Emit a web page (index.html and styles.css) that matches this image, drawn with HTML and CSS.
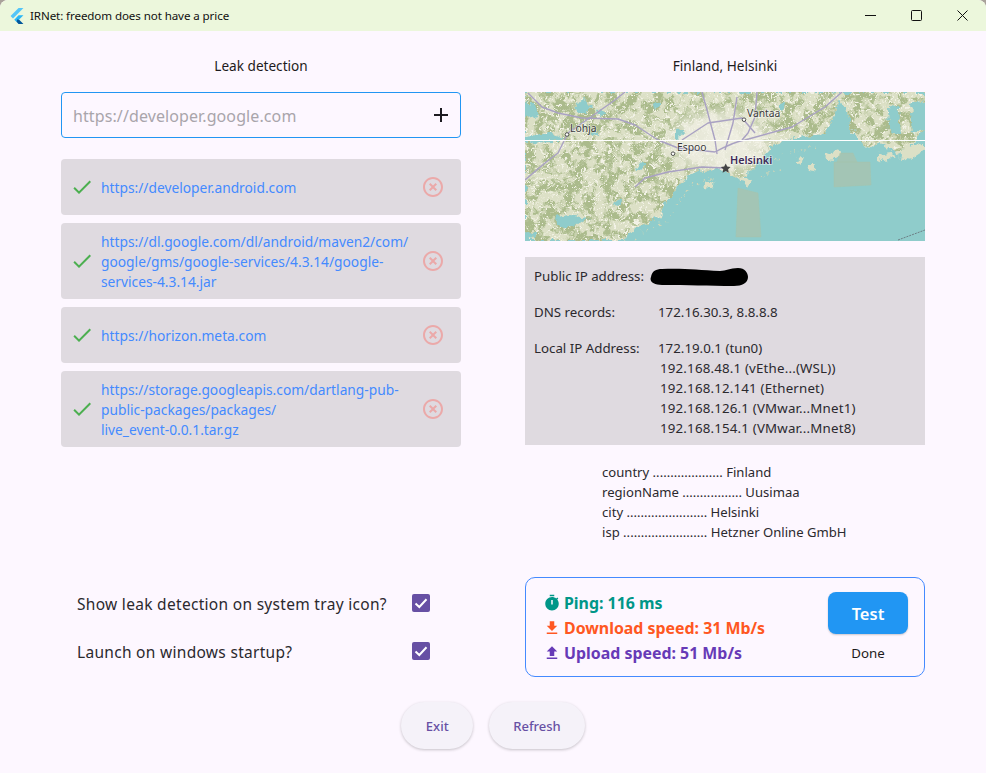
FILE: index.html
```html
<!DOCTYPE html>
<html lang="en">
<head>
<meta charset="utf-8">
<title>IRNet</title>
<link rel="stylesheet" href="styles.css">
</head>
<body>
<div class="window">
  <header class="titlebar">
    <svg class="logo" viewBox="2 0 20 24"><path class="logo-a" d="M14.3 0 2.300 12 6 15.700 21.700 0z"/><path class="logo-b" d="M14.300 11 7.900 17.500l3.600 3.600L21.700 11z"/><path class="logo-c" d="M11.500 21.100 14.300 24h7.400l-6.400-6.500-3.300-.4z"/></svg>
    <span class="app-title">IRNet: freedom does not have a price</span>
    <div class="win-controls">
      <span class="win-btn"><svg class="win-icon" viewBox="0 0 11 11"><path d="M0 5.500h11"/></svg></span>
      <span class="win-btn"><svg class="win-icon" viewBox="0 0 11 11"><rect x=".5" y=".5" width="10" height="10" rx="1"/></svg></span>
      <span class="win-btn"><svg class="win-icon" viewBox="0 0 11 11"><path d="M.5.500l10 10M10.500.500l-10 10"/></svg></span>
    </div>
  </header>

  <main class="content">
    <div class="columns">
      <section class="col">
        <h2 class="col-title">Leak detection</h2>
        <div class="url-input">
          <span class="placeholder">https://developer.google.com</span>
          <svg class="plus" viewBox="0 0 24 24"><path d="M19 13h-6v6h-2v-6H5v-2h6V5h2v6h6v2z"/></svg>
        </div>
        <ul class="url-list">
          <li class="url-item">
            <svg class="ok" viewBox="0 0 24 24"><path d="M9 16.170 4.830 12l-1.420 1.410L9 19 21 7l-1.410-1.410z"/></svg>
            <span class="url">https://developer.android.com</span>
            <svg class="del" viewBox="0 0 24 24"><path d="M14.590 8 12 10.590 9.410 8 8 9.410 10.590 12 8 14.590 9.410 16 12 13.410 14.590 16 16 14.590 13.410 12 16 9.410 14.590 8zM12 2C6.470 2 2 6.470 2 12s4.470 10 10 10 10-4.470 10-10S17.530 2 12 2zm0 18c-4.410 0-8-3.590-8-8s3.590-8 8-8 8 3.590 8 8-3.590 8-8 8z"/></svg>
          </li>
          <li class="url-item">
            <svg class="ok" viewBox="0 0 24 24"><path d="M9 16.170 4.830 12l-1.420 1.410L9 19 21 7l-1.410-1.410z"/></svg>
            <span class="url">https://dl.google.com/dl/android/maven2/com/<br>google/gms/google-services/4.3.14/google-<br>services-4.3.14.jar</span>
            <svg class="del" viewBox="0 0 24 24"><path d="M14.590 8 12 10.590 9.410 8 8 9.410 10.590 12 8 14.590 9.410 16 12 13.410 14.590 16 16 14.590 13.410 12 16 9.410 14.590 8zM12 2C6.470 2 2 6.470 2 12s4.470 10 10 10 10-4.470 10-10S17.530 2 12 2zm0 18c-4.410 0-8-3.590-8-8s3.590-8 8-8 8 3.590 8 8-3.590 8-8 8z"/></svg>
          </li>
          <li class="url-item">
            <svg class="ok" viewBox="0 0 24 24"><path d="M9 16.170 4.830 12l-1.420 1.410L9 19 21 7l-1.410-1.410z"/></svg>
            <span class="url">https://horizon.meta.com</span>
            <svg class="del" viewBox="0 0 24 24"><path d="M14.590 8 12 10.590 9.410 8 8 9.410 10.590 12 8 14.590 9.410 16 12 13.410 14.590 16 16 14.590 13.410 12 16 9.410 14.590 8zM12 2C6.470 2 2 6.470 2 12s4.470 10 10 10 10-4.470 10-10S17.530 2 12 2zm0 18c-4.410 0-8-3.590-8-8s3.590-8 8-8 8 3.590 8 8-3.590 8-8 8z"/></svg>
          </li>
          <li class="url-item">
            <svg class="ok" viewBox="0 0 24 24"><path d="M9 16.170 4.830 12l-1.420 1.410L9 19 21 7l-1.410-1.410z"/></svg>
            <span class="url">https://storage.googleapis.com/dartlang-pub-<br>public-packages/packages/<br>live_event-0.0.1.tar.gz</span>
            <svg class="del" viewBox="0 0 24 24"><path d="M14.590 8 12 10.590 9.410 8 8 9.410 10.590 12 8 14.590 9.410 16 12 13.410 14.590 16 16 14.590 13.410 12 16 9.410 14.590 8zM12 2C6.470 2 2 6.470 2 12s4.470 10 10 10 10-4.470 10-10S17.530 2 12 2zm0 18c-4.410 0-8-3.590-8-8s3.590-8 8-8 8 3.590 8 8-3.590 8-8 8z"/></svg>
          </li>
        </ul>
      </section>

      <section class="col">
        <h2 class="col-title">Finland, Helsinki</h2>
        <svg class="map" viewBox="0 0 400 149">
          <defs>
            <filter id="rough" x="-5%" y="-5%" width="110%" height="110%" color-interpolation-filters="sRGB">
              <feTurbulence type="fractalNoise" baseFrequency=".14" numOctaves="4" seed="7"/>
              <feDisplacementMap in="SourceGraphic" scale="10" xChannelSelector="R" yChannelSelector="G"/>
            </filter>
            <filter id="forest" x="0" y="0" width="100%" height="100%" color-interpolation-filters="sRGB">
              <feTurbulence type="fractalNoise" baseFrequency=".1" numOctaves="5" seed="3"/>
              <feColorMatrix type="matrix" values="0 0 0 0 .67  0 0 0 0 .735  0 0 0 0 .55  7 0 0 0 -3.100"/>
            </filter>
            <filter id="urban" x="0" y="0" width="100%" height="100%" color-interpolation-filters="sRGB">
              <feTurbulence type="fractalNoise" baseFrequency=".4" numOctaves="2" seed="11"/>
              <feColorMatrix type="matrix" values="0 0 0 0 .95  0 0 0 0 .95  0 0 0 0 .9  0 8 0 0 -4.600"/>
            </filter>
            <radialGradient id="cityfade"><stop offset="0" stop-color="#efeee2"/><stop offset=".65" stop-color="#efeee2" stop-opacity=".8"/><stop offset="1" stop-color="#efeee2" stop-opacity="0"/></radialGradient>
            <clipPath id="landclip"><path d="M0 0H400V35L385 55 370 60 355 50 345 55 330 45 322 20 315 8 308 25 300 42 270 45 250 52 240 62 225 80 215 88 205 82 195 76 175 80 160 85 145 105 135 125 110 135 100 149H0z"/></clipPath>
          </defs>
          <rect class="m-water" width="400" height="149"/>
          <g filter="url(#rough)">
            <g clip-path="url(#landclip)">
              <rect class="m-land" width="400" height="149"/>
              <rect width="400" height="149" filter="url(#forest)"/>
              <ellipse cx="195" cy="50" rx="62" ry="38" fill="url(#cityfade)"/>
              <rect width="400" height="149" filter="url(#urban)"/>
            </g>
            <path class="m-land" d="M300 62l12-4 6 3-8 7-8-1zM352 62l14-2 4 4-10 6-8-2zM372 60l18-8 10-1v7l-14 9-12-2zM212 86l14 2-3 5-10-2zM284 74l8 0-3 5-7-1zM180 92l8-2 1 5-7 2zM270 68l8-2-1 4-6 1zM60 140l10-2 2 4-10 2z"/>
            <path class="m-skerries" d="M112 146 122 138 140 130 152 112 168 92 190 86M240 72 262 60 290 56M236 84 256 78"/>
            <g class="m-lakes">
              <path d="M0 10 10 12 13 24 3 26 0 24zM50 10l12-2 4 10-10 4zM72 20l6-3 2 7-6 1zM0 44l28-3 12 6-12 3-28 1zM150 38l6-1 1 8-7 1zM112 72l10-1 1 5-10 2zM30 126l14-3 20 3-8 6-18 4zM0 140l10 1-2 6-8 2zM363 14l11 1 2 28-12-4zM385 12l15-4v28l-12 4zM64 40l10-3 1 6-9 2zM128 12l6-2 1 5-6 2zM254 12l7-1-1 7-6 1zM88 108l9 1-3 5-7-1z"/>
            </g>
          </g>
          <path class="m-area" d="M213 96 233 101 236 145 211 145zM309 70H345L346 93 309 95zM315 61H328L332 70H312z"/>
          <g class="m-roads">
            <path d="M3 1 17 15 33 21 57 26 93 27 110 33 133 48 153 56 190 60"/>
            <path d="M190 60C205 52 212 49 220 48L267 35 300 15 317 0"/>
            <path d="M157 48 183 31 217 26 230 41"/>
            <path d="M177 0 182 18 190 48 192 62M212 5 208 31 200 58M232 0 230 25 223 41 217 48"/>
            <path d="M0 88 20 71 33 61 43 41 90 8 100 0"/>
            <path d="M110 95 120 86 143 80 177 75 200 76"/>
          </g>
          <path class="m-shore" d="M373 148 400 138"/>
          <rect class="m-seam" y="48" width="400" height="1"/>
          <g class="m-towns">
            <circle cx="42" cy="42.500" r="1.800"/>
            <circle cx="148" cy="61.700" r="1.800"/>
            <circle cx="219" cy="27.700" r="1.800"/>
          </g>
          <text class="m-label" x="45" y="40">Lohja</text>
          <text class="m-label" x="152" y="59">Espoo</text>
          <text class="m-label" x="222" y="25.300">Vantaa</text>
          <path class="m-star" d="M200.700 71.500l1.500 3.100 3.400.4-2.500 2.300.7 3.400-3.100-1.700-3.100 1.700.7-3.400-2.500-2.300 3.400-.4z"/>
          <text class="m-label m-capital" x="205" y="72">Helsinki</text>
        </svg>

        <div class="net-info">
          <div class="net-row">
            <span class="net-short">Public IP address:</span>
            <svg class="redact" viewBox="3 0 97 18"><path d="M3 9C4 3 8 1 14 1 35 0 50 2 72 3 78 3 82 0 90 0 97 0 100 5 100 9 100 15 94 18 86 18 60 18 40 17 14 17 6 17 1 14 3 9z"/></svg>
          </div>
          <div class="net-row"><span class="net-label">DNS records:</span><span>172.16.30.3, 8.8.8.8</span></div>
          <div class="net-row">
            <span class="net-label">Local IP Address:</span>
            <div class="ip-list">
              <span>172.19.0.1 (tun0)</span>
              <span class="ip-more">192.168.48.1 (vEthe...(WSL))</span>
              <span class="ip-more">192.168.12.141 (Ethernet)</span>
              <span class="ip-more">192.168.126.1 (VMwar...Mnet1)</span>
              <span class="ip-more">192.168.154.1 (VMwar...Mnet8)</span>
            </div>
          </div>
        </div>

        <div class="geo">
          <div>country .................... Finland</div>
          <div>regionName ................. Uusimaa</div>
          <div>city ....................... Helsinki</div>
          <div>isp ........................ Hetzner Online GmbH</div>
        </div>
      </section>
    </div>

    <div class="columns lower">
      <div class="settings">
        <label class="setting"><span>Show leak detection on system tray icon?</span>
          <span class="checkbox"><svg viewBox="0 0 18 18"><path d="M3.500 9.500 7.300 13 14.500 5.300"/></svg></span></label>
        <label class="setting"><span>Launch on windows startup?</span>
          <span class="checkbox"><svg viewBox="0 0 18 18"><path d="M3.500 9.500 7.300 13 14.500 5.300"/></svg></span></label>
      </div>
      <div class="speed">
        <div class="speed-lines">
          <div class="speed-line ping"><svg viewBox="0 0 24 24"><path fill-rule="evenodd" d="M9 1h6v2H9zm10.030 6.390 1.420-1.420c-.43-.51-.9-.99-1.410-1.410l-1.420 1.420C16.070 4.740 14.120 4 12 4c-4.970 0-9 4.030-9 9s4.020 9 9 9 9-4.030 9-9c0-2.120-.74-4.070-1.970-5.610zM13 14h-2V8h2v6z"/></svg>Ping: 116 ms</div>
          <div class="speed-line down"><svg viewBox="0 0 24 24"><path d="M19 9h-4V3H9v6H5l7 7 7-7zM5 18v2h14v-2H5z"/></svg>Download speed: 31 Mb/s</div>
          <div class="speed-line up"><svg viewBox="0 0 24 24"><path d="M9 16h6v-6h4l-7-7-7 7h4zm-4 2h14v2H5z"/></svg>Upload speed: 51 Mb/s</div>
        </div>
        <div class="test">
          <button class="test-btn" type="button">Test</button>
          <span class="test-status">Done</span>
        </div>
      </div>
    </div>

    <footer class="actions">
      <button class="pill" type="button">Exit</button>
      <button class="pill" type="button">Refresh</button>
    </footer>
  </main>
</div>
</body>
</html>
```
FILE: styles.css
```css
* { box-sizing: border-box; }
html, body { margin: 0; height: 100%; }
body { background: #a9a29a; font-family: "Noto Sans", "Open Sans", sans-serif; color: #1d1b20; overflow: hidden; }
.window { width: 986px; height: 773px; background: #fdf7ff; border-radius: 8px 8px 0 0; overflow: hidden; display: flex; flex-direction: column; }
.titlebar { height: 31px; flex: none; background: #ecf7dc; display: flex; align-items: center; padding-left: 10px; }
.logo { width: 14px; height: 16px; margin-right: 6px; }
.logo-a { fill: #54c5f8; }
.logo-b { fill: #29b6f6; }
.logo-c { fill: #01579b; }
.app-title { font-size: 11.600px; letter-spacing: -.1px; color: #111; }
.win-controls { margin-left: auto; display: flex; align-items: center; height: 100%; padding-right: 1px; }
.win-btn { width: 46px; height: 100%; display: flex; align-items: center; justify-content: center; }
.win-icon { width: 11px; height: 11px; fill: none; stroke: #111; stroke-width: 1; }
.content { flex: 1; padding: 0 61px; display: flex; flex-direction: column; }
.columns { display: grid; grid-template-columns: 400px 400px; column-gap: 64px; }
.col-title { margin: 25px 0 16px; font-size: 13.600px; font-weight: 400; line-height: 20px; text-align: center; color: #1d1b20; }
.url-input { height: 46px; border: 1px solid #2196f3; border-radius: 4px; display: flex; align-items: center; justify-content: space-between; padding: 0 7px 0 11px; }
.placeholder { font-size: 16px; letter-spacing: .1px; color: #a9a5ab; padding-top: 2px; }
.plus { width: 24px; height: 24px; fill: #1d1b20; }
.url-list { list-style: none; margin: 21px 0 0; padding: 0; display: flex; flex-direction: column; gap: 8px; }
.url-item { min-height: 56px; background: #dfdae0; border-radius: 4px; padding: 8px 16px 7px 9px; display: flex; align-items: center; }
.ok { width: 24px; height: 24px; flex: none; fill: #4caf50; margin: -2px 7px 0 0; }
.url { flex: 1; font-size: 13.770px; line-height: 20px; padding-top: 1px; color: #448aff; white-space: nowrap; }
.del { width: 24px; height: 24px; flex: none; fill: #eba9a9; margin-top: -2px; }
.map { display: block; width: 400px; height: 149px; }
.m-water { fill: #8fcccb; }
.m-land { fill: #dce0c6; }
.m-lakes { fill: #8fcccb; }
.m-skerries { fill: none; stroke: #cfd6b8; stroke-width: 1.400; stroke-dasharray: 1.500 5; }
.m-area { fill: #a8c4b0; stroke: #a9c2a6; stroke-width: .5; opacity: .8; }
.m-roads { fill: none; stroke: #a9a1c3; stroke-width: 1.400; stroke-linejoin: round; }
.m-shore { stroke: #6d7f85; stroke-width: 1; stroke-dasharray: 2 1; }
.m-seam { fill: #fff; }
.m-towns { fill: #fff; stroke: #444; stroke-width: .9; }
.m-label { font-size: 10.300px; fill: #3a3a3a; stroke: rgba(255,255,255,.55); stroke-width: 1.500px; paint-order: stroke; }
.m-capital { font-size: 10.800px; font-weight: 600; fill: #3d2b57; }
.m-star { fill: #444; }
.net-info { margin-top: 16px; background: #dfdae0; padding: 9px 9px 7px; height: 188px; font-size: 13.300px; line-height: 20px; color: #2b292e; display: flex; flex-direction: column; gap: 16px; }
.net-row { display: flex; }
.net-label { width: 124px; flex: none; }
.net-short { width: 116px; flex: none; }
.redact { width: 99px; height: 18px; margin-top: 2px; }
.ip-list { display: flex; flex-direction: column; }
.ip-more { padding-left: 2px; letter-spacing: .18px; }
.geo { margin-top: 17px; padding-left: 77px; font-size: 13.100px; line-height: 20px; color: #2b292e; white-space: nowrap; }
.lower { margin-top: 35px; }
.settings { padding: 3px 31px 0 16px; display: flex; flex-direction: column; }
.setting { height: 48px; display: flex; align-items: center; justify-content: space-between; font-size: 15.500px; color: #2b292e; letter-spacing: .3px; }
.checkbox { width: 18px; height: 18px; background: #6750a4; border-radius: 2px; display: block; margin-top: -2px; }
.checkbox svg { display: block; width: 18px; height: 18px; fill: none; stroke: #fff; stroke-width: 2; }
.speed { height: 100px; border: 1px solid #448aff; border-radius: 10px; padding: 0 16px 0 17px; display: flex; align-items: center; justify-content: space-between; }
.speed-lines { display: flex; flex-direction: column; gap: 5px; padding-top: 2px; }
.speed-line { display: flex; align-items: center; font-size: 15.900px; font-weight: 700; line-height: 20px; }
.speed-line svg { width: 18px; height: 18px; margin-right: 3px; fill: currentColor; }
.ping { color: #009688; }
.down { color: #ff5722; }
.up { color: #673ab7; }
.test { display: flex; flex-direction: column; align-items: center; gap: 9px; }
.test-btn { width: 80px; height: 42px; padding: 2px 0 0; border: 0; border-radius: 8px; background: #2196f3; color: #fff; font: 600 16.500px "Noto Sans", sans-serif; box-shadow: 0 1px 2px rgba(0,0,0,.2); }
.test-status { font-size: 13.300px; line-height: 20px; color: #1d1b20; }
.actions { margin-top: 25px; display: flex; justify-content: center; gap: 16px; }
.pill { min-width: 72px; height: 47px; padding: 0 24px; border: 0; border-radius: 24px; background: #f5f2f9; color: #6750a4; font: 500 13px "Noto Sans", sans-serif; box-shadow: 0 1px 3px rgba(0,0,0,.22); }
```
